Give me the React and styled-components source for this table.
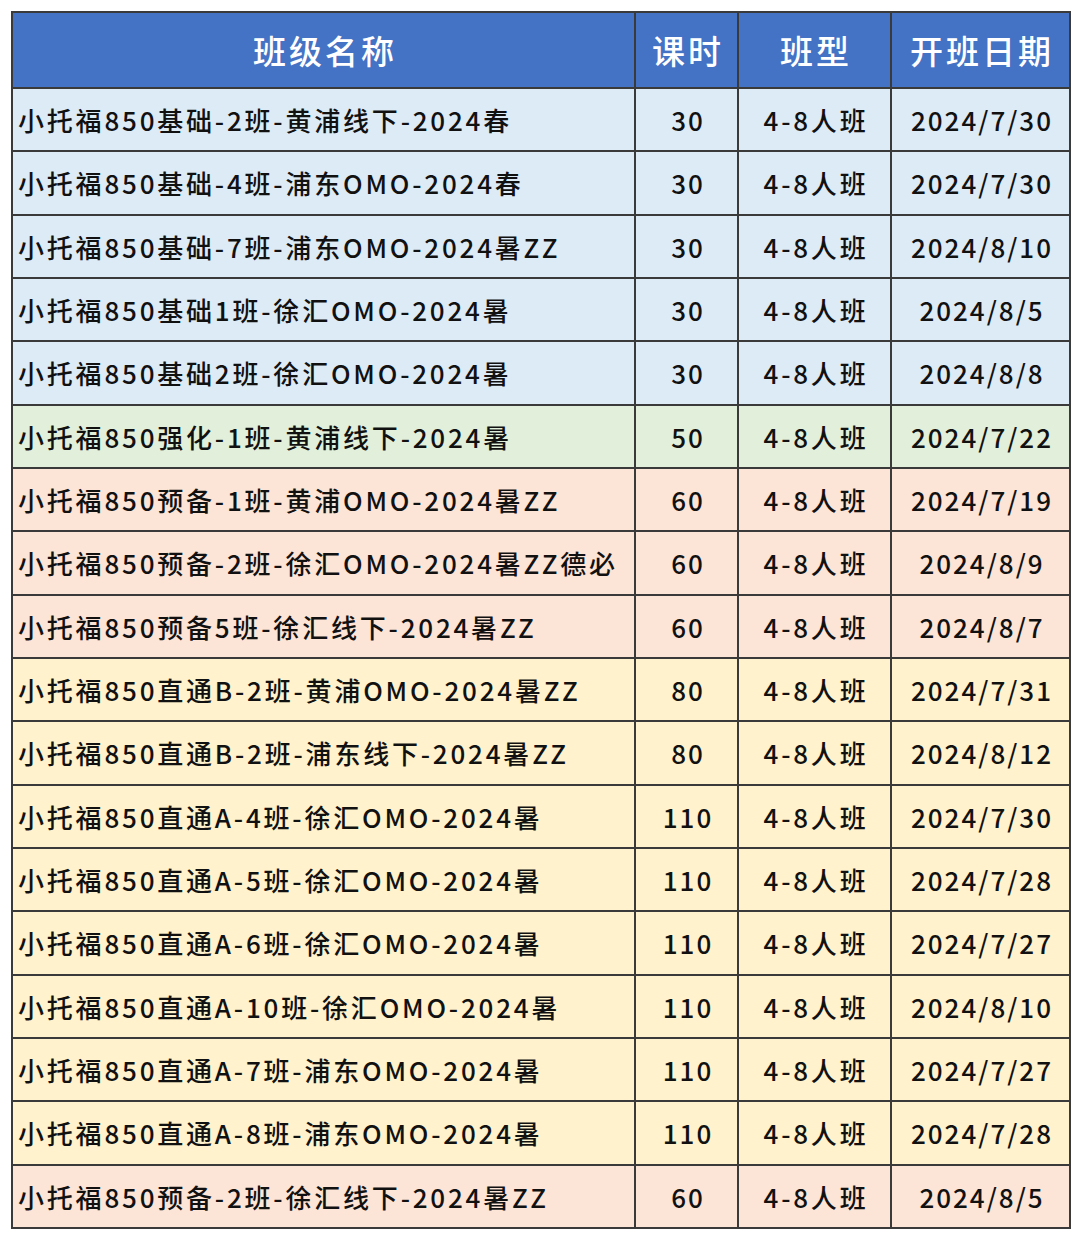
import React from "react";
import styled, { createGlobalStyle } from "styled-components";

const GlobalStyle = createGlobalStyle`
  html, body {
    margin: 0;
    padding: 0;
    background: #ffffff;
  }
`;

const Page = styled.div`
  padding: 11px 12px 12px 11px;
  font-family: "Noto Sans CJK SC", "Noto Sans", sans-serif;
`;

const Table = styled.table`
  width: 1058px;
  border-collapse: collapse;
  table-layout: fixed;
  border: 2px solid #3a3a3a;
`;

const HeadCell = styled.th`
  height: 74px;
  padding: 0 0 0 3px;
  background-color: #4472c4;
  color: #ffffff;
  font-size: 33px;
  font-weight: 500;
  letter-spacing: 3px;
  text-align: center;
  border: 2px solid #3a3a3a;
`;

const rowColors = {
  blue: "#ddebf7",
  green: "#e2efda",
  pink: "#fce4d6",
  yellow: "#fff2cc",
};

const Row = styled.tr`
  background-color: ${(p) => rowColors[p.$tone]};
`;

const Cell = styled.td`
  height: 61.33px;
  padding: 0 0 0 ${(p) => (p.$left ? "5px" : "3px")};
  font-size: 26px;
  font-weight: 500;
  letter-spacing: ${(p) => (p.$tight ? "2px" : "2.8px")};
  color: #111111;
  white-space: nowrap;
  text-align: ${(p) => (p.$left ? "left" : "center")};
  border: 2px solid #3a3a3a;
`;

const rows = [
  ["小托福850基础-2班-黄浦线下-2024春", 30, "2024/7/30", "blue"],
  ["小托福850基础-4班-浦东OMO-2024春", 30, "2024/7/30", "blue"],
  ["小托福850基础-7班-浦东OMO-2024暑ZZ", 30, "2024/8/10", "blue"],
  ["小托福850基础1班-徐汇OMO-2024暑", 30, "2024/8/5", "blue"],
  ["小托福850基础2班-徐汇OMO-2024暑", 30, "2024/8/8", "blue"],
  ["小托福850强化-1班-黄浦线下-2024暑", 50, "2024/7/22", "green"],
  ["小托福850预备-1班-黄浦OMO-2024暑ZZ", 60, "2024/7/19", "pink"],
  ["小托福850预备-2班-徐汇OMO-2024暑ZZ德必", 60, "2024/8/9", "pink"],
  ["小托福850预备5班-徐汇线下-2024暑ZZ", 60, "2024/8/7", "pink"],
  ["小托福850直通B-2班-黄浦OMO-2024暑ZZ", 80, "2024/7/31", "yellow"],
  ["小托福850直通B-2班-浦东线下-2024暑ZZ", 80, "2024/8/12", "yellow"],
  ["小托福850直通A-4班-徐汇OMO-2024暑", 110, "2024/7/30", "yellow"],
  ["小托福850直通A-5班-徐汇OMO-2024暑", 110, "2024/7/28", "yellow"],
  ["小托福850直通A-6班-徐汇OMO-2024暑", 110, "2024/7/27", "yellow"],
  ["小托福850直通A-10班-徐汇OMO-2024暑", 110, "2024/8/10", "yellow"],
  ["小托福850直通A-7班-浦东OMO-2024暑", 110, "2024/7/27", "yellow"],
  ["小托福850直通A-8班-浦东OMO-2024暑", 110, "2024/7/28", "yellow"],
  ["小托福850预备-2班-徐汇线下-2024暑ZZ", 60, "2024/8/5", "pink"],
];

export default function App() {
  return (
    <Page>
      <GlobalStyle />
      <Table>
        <colgroup>
          <col style={{ width: 623 }} />
          <col style={{ width: 103 }} />
          <col style={{ width: 153 }} />
          <col style={{ width: 179 }} />
        </colgroup>
        <thead>
          <tr>
            <HeadCell>班级名称</HeadCell>
            <HeadCell>课时</HeadCell>
            <HeadCell>班型</HeadCell>
            <HeadCell>开班日期</HeadCell>
          </tr>
        </thead>
        <tbody>
          {rows.map(([name, hours, date, tone]) => (
            <Row key={name} $tone={tone}>
              <Cell $left>{name}</Cell>
              <Cell $tight>{hours}</Cell>
              <Cell>4-8人班</Cell>
              <Cell $tight>{date}</Cell>
            </Row>
          ))}
        </tbody>
      </Table>
    </Page>
  );
}
